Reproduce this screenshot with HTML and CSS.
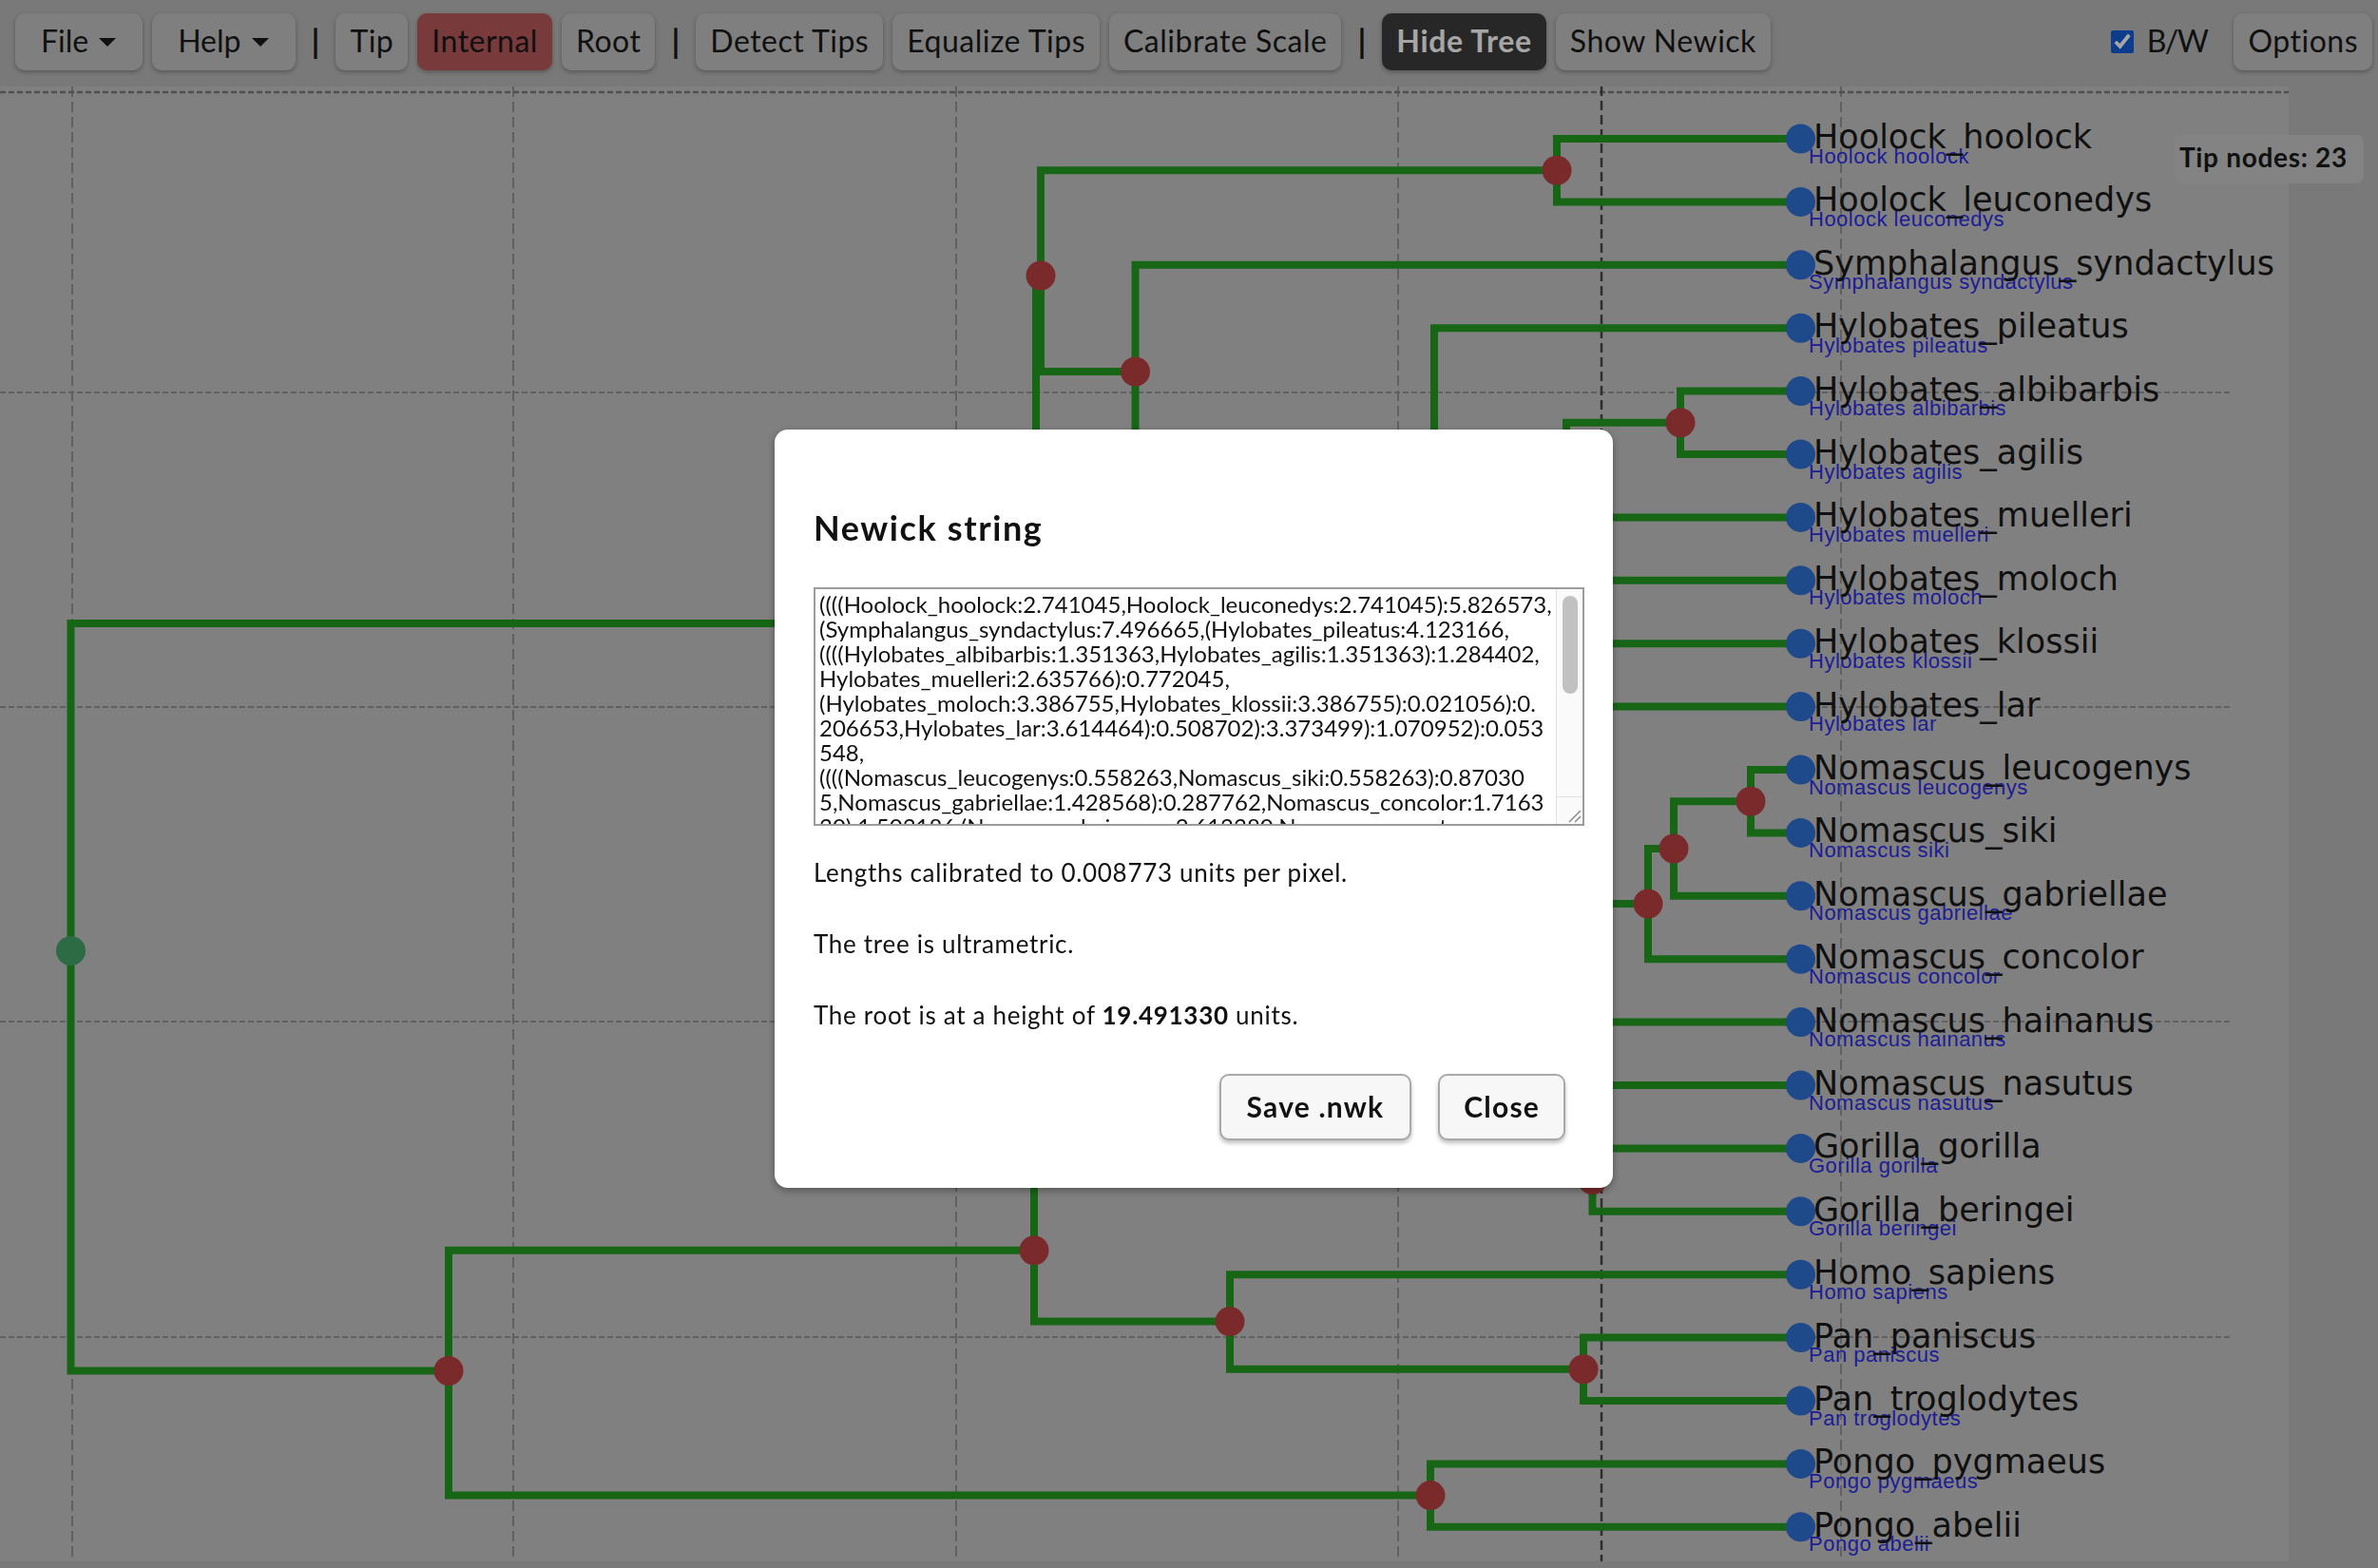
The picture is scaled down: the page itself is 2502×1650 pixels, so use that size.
FILE: index.html
```html
<!DOCTYPE html>
<html lang="en">
<head>
<meta charset="utf-8">
<title>Tree digitizer</title>
<link rel="stylesheet" href="styles.css">
</head>
<body>
<div class="app">
  <header class="toolbar">
    <button class="btn dropdown">File<span class="caret"></span></button>
    <button class="btn dropdown">Help<span class="caret"></span></button>
    <span class="sep">|</span>
    <button class="btn">Tip</button>
    <button class="btn btn-internal">Internal</button>
    <button class="btn">Root</button>
    <span class="sep">|</span>
    <button class="btn">Detect Tips</button>
    <button class="btn">Equalize Tips</button>
    <button class="btn">Calibrate Scale</button>
    <span class="sep">|</span>
    <button class="btn btn-dark">Hide Tree</button>
    <button class="btn">Show Newick</button>
    <span class="spacer"></span>
    <label class="bw"><input type="checkbox" checked>B/W</label>
    <button class="btn">Options</button>
  </header>

  <main class="workspace">
    <svg class="plot" width="2408" height="1552" viewBox="0 91 2408 1552" xmlns="http://www.w3.org/2000/svg">
      <g class="grid grid-v">
        <line x1="76" y1="91" x2="76" y2="1643"/>
        <line x1="540" y1="91" x2="540" y2="1643"/>
        <line x1="1006" y1="91" x2="1006" y2="1643"/>
        <line x1="1471" y1="91" x2="1471" y2="1643"/>
        <line x1="1937" y1="91" x2="1937" y2="1643"/>
      </g>
      <g class="grid grid-h">
        <line x1="0" y1="413" x2="2348" y2="413"/>
        <line x1="0" y1="744" x2="2348" y2="744"/>
        <line x1="0" y1="1075" x2="2348" y2="1075"/>
        <line x1="0" y1="1407" x2="2348" y2="1407"/>
      </g>
      <line class="frame-top" x1="0" y1="97" x2="2408" y2="97"/>
      <line class="grid-mark" x1="1685" y1="91" x2="1685" y2="1643"/>

      <path class="branch" d="M1090 656H74.5V1000.5 M472 1442.5H74.5V1000.5
        M1095 290H1090V656 M1594 1030H1090V656
        M1638 179.2H1095V290 M1194.5 391H1095V290
        M1894 146H1638V179.2 M1894 212.4H1638V179.2
        M1894 278.8H1194.5V391 M1509 500.8H1194.5V391
        M1894 345.2H1509V500.8 M1557 656.5H1509V500.8
        M1576 569.3H1557V656.5 M1894 743.6H1557V656.5
        M1648 494.6H1576V569.3 M1578 644H1576V569.3
        M1768 444.8H1648V494.6 M1894 544.4H1648V494.6
        M1894 411.6H1768V444.8 M1894 478H1768V444.8
        M1894 610.8H1578V644 M1894 677.2H1578V644
        M1734 951H1594V1030 M1651 1108.8H1594V1030
        M1761 893H1734V951 M1894 1009.2H1734V951
        M1842 843.2H1761V893 M1894 942.8H1761V893
        M1894 810H1842V843.2 M1894 876.4H1842V843.2
        M1894 1075.6H1651V1108.8 M1894 1142H1651V1108.8
        M1088 1315.8H472V1442.5 M1505 1573.6H472V1442.5
        M1675.5 1241.6H1088V1315.8 M1294 1390.6H1088V1315.8
        M1894 1208.4H1675.5V1241.6 M1894 1274.8H1675.5V1241.6
        M1894 1341.2H1294V1390.6 M1666 1440.8H1294V1390.6
        M1894 1407.6H1666V1440.8 M1894 1474H1666V1440.8
        M1894 1540.4H1505V1573.6 M1894 1606.8H1505V1573.6"/>

      <g class="node-int">
        <circle cx="1090" cy="656" r="15.5"/>
        <circle cx="1095" cy="290" r="15.5"/>
        <circle cx="1638" cy="179.2" r="15.5"/>
        <circle cx="1194.5" cy="391" r="15.5"/>
        <circle cx="1509" cy="500.8" r="15.5"/>
        <circle cx="1557" cy="656.5" r="15.5"/>
        <circle cx="1576" cy="569.3" r="15.5"/>
        <circle cx="1648" cy="494.6" r="15.5"/>
        <circle cx="1578" cy="644" r="15.5"/>
        <circle cx="1768" cy="444.8" r="15.5"/>
        <circle cx="1594" cy="1030" r="15.5"/>
        <circle cx="1734" cy="951" r="15.5"/>
        <circle cx="1761" cy="893" r="15.5"/>
        <circle cx="1842" cy="843.2" r="15.5"/>
        <circle cx="1651" cy="1108.8" r="15.5"/>
        <circle cx="472" cy="1442.5" r="15.5"/>
        <circle cx="1088" cy="1315.8" r="15.5"/>
        <circle cx="1675.5" cy="1241.6" r="15.5"/>
        <circle cx="1294" cy="1390.6" r="15.5"/>
        <circle cx="1666" cy="1440.8" r="15.5"/>
        <circle cx="1505" cy="1573.6" r="15.5"/>
      </g>
      <circle class="node-root" cx="74.5" cy="1000.5" r="15.5"/>

      <g class="tip" transform="translate(1894.5 146)"><circle r="15.5"/><text class="sci" x="8.5" y="25.7">Hoolock hoolock</text><text class="lbl" x="13.5" y="10">Hoolock_hoolock</text></g>
      <g class="tip" transform="translate(1894.5 212.4)"><circle r="15.5"/><text class="sci" x="8.5" y="25.7">Hoolock leuconedys</text><text class="lbl" x="13.5" y="10">Hoolock_leuconedys</text></g>
      <g class="tip" transform="translate(1894.5 278.8)"><circle r="15.5"/><text class="sci" x="8.5" y="25.7">Symphalangus syndactylus</text><text class="lbl" x="13.5" y="10">Symphalangus_syndactylus</text></g>
      <g class="tip" transform="translate(1894.5 345.2)"><circle r="15.5"/><text class="sci" x="8.5" y="25.7">Hylobates pileatus</text><text class="lbl" x="13.5" y="10">Hylobates_pileatus</text></g>
      <g class="tip" transform="translate(1894.5 411.6)"><circle r="15.5"/><text class="sci" x="8.5" y="25.7">Hylobates albibarbis</text><text class="lbl" x="13.5" y="10">Hylobates_albibarbis</text></g>
      <g class="tip" transform="translate(1894.5 478)"><circle r="15.5"/><text class="sci" x="8.5" y="25.7">Hylobates agilis</text><text class="lbl" x="13.5" y="10">Hylobates_agilis</text></g>
      <g class="tip" transform="translate(1894.5 544.4)"><circle r="15.5"/><text class="sci" x="8.5" y="25.7">Hylobates muelleri</text><text class="lbl" x="13.5" y="10">Hylobates_muelleri</text></g>
      <g class="tip" transform="translate(1894.5 610.8)"><circle r="15.5"/><text class="sci" x="8.5" y="25.7">Hylobates moloch</text><text class="lbl" x="13.5" y="10">Hylobates_moloch</text></g>
      <g class="tip" transform="translate(1894.5 677.2)"><circle r="15.5"/><text class="sci" x="8.5" y="25.7">Hylobates klossii</text><text class="lbl" x="13.5" y="10">Hylobates_klossii</text></g>
      <g class="tip" transform="translate(1894.5 743.6)"><circle r="15.5"/><text class="sci" x="8.5" y="25.7">Hylobates lar</text><text class="lbl" x="13.5" y="10">Hylobates_lar</text></g>
      <g class="tip" transform="translate(1894.5 810)"><circle r="15.5"/><text class="sci" x="8.5" y="25.7">Nomascus leucogenys</text><text class="lbl" x="13.5" y="10">Nomascus_leucogenys</text></g>
      <g class="tip" transform="translate(1894.5 876.4)"><circle r="15.5"/><text class="sci" x="8.5" y="25.7">Nomascus siki</text><text class="lbl" x="13.5" y="10">Nomascus_siki</text></g>
      <g class="tip" transform="translate(1894.5 942.8)"><circle r="15.5"/><text class="sci" x="8.5" y="25.7">Nomascus gabriellae</text><text class="lbl" x="13.5" y="10">Nomascus_gabriellae</text></g>
      <g class="tip" transform="translate(1894.5 1009.2)"><circle r="15.5"/><text class="sci" x="8.5" y="25.7">Nomascus concolor</text><text class="lbl" x="13.5" y="10">Nomascus_concolor</text></g>
      <g class="tip" transform="translate(1894.5 1075.6)"><circle r="15.5"/><text class="sci" x="8.5" y="25.7">Nomascus hainanus</text><text class="lbl" x="13.5" y="10">Nomascus_hainanus</text></g>
      <g class="tip" transform="translate(1894.5 1142)"><circle r="15.5"/><text class="sci" x="8.5" y="25.7">Nomascus nasutus</text><text class="lbl" x="13.5" y="10">Nomascus_nasutus</text></g>
      <g class="tip" transform="translate(1894.5 1208.4)"><circle r="15.5"/><text class="sci" x="8.5" y="25.7">Gorilla gorilla</text><text class="lbl" x="13.5" y="10">Gorilla_gorilla</text></g>
      <g class="tip" transform="translate(1894.5 1274.8)"><circle r="15.5"/><text class="sci" x="8.5" y="25.7">Gorilla beringei</text><text class="lbl" x="13.5" y="10">Gorilla_beringei</text></g>
      <g class="tip" transform="translate(1894.5 1341.2)"><circle r="15.5"/><text class="sci" x="8.5" y="25.7">Homo sapiens</text><text class="lbl" x="13.5" y="10">Homo_sapiens</text></g>
      <g class="tip" transform="translate(1894.5 1407.6)"><circle r="15.5"/><text class="sci" x="8.5" y="25.7">Pan paniscus</text><text class="lbl" x="13.5" y="10">Pan_paniscus</text></g>
      <g class="tip" transform="translate(1894.5 1474)"><circle r="15.5"/><text class="sci" x="8.5" y="25.7">Pan troglodytes</text><text class="lbl" x="13.5" y="10">Pan_troglodytes</text></g>
      <g class="tip" transform="translate(1894.5 1540.4)"><circle r="15.5"/><text class="sci" x="8.5" y="25.7">Pongo pygmaeus</text><text class="lbl" x="13.5" y="10">Pongo_pygmaeus</text></g>
      <g class="tip" transform="translate(1894.5 1606.8)"><circle r="15.5"/><text class="sci" x="8.5" y="25.7">Pongo abelii</text><text class="lbl" x="13.5" y="10">Pongo_abelii</text></g>
    </svg>
    <aside class="side"></aside>
    <div class="tipcount">Tip nodes: 23</div>
  </main>
</div>

<div class="backdrop">
  <section class="modal" role="dialog" aria-labelledby="newick-title">
    <h2 id="newick-title" class="modal-title">Newick string</h2>
    <div class="newick-field">
      <textarea class="newick" spellcheck="false">
((((Hoolock_hoolock:2.741045,Hoolock_leuconedys:2.741045):5.826573,
(Symphalangus_syndactylus:7.496665,(Hylobates_pileatus:4.123166,
((((Hylobates_albibarbis:1.351363,Hylobates_agilis:1.351363):1.284402,
Hylobates_muelleri:2.635766):0.772045,
(Hylobates_moloch:3.386755,Hylobates_klossii:3.386755):0.021056):0.
206653,Hylobates_lar:3.614464):0.508702):3.373499):1.070952):0.053
548,
((((Nomascus_leucogenys:0.558263,Nomascus_siki:0.558263):0.87030
5,Nomascus_gabriellae:1.428568):0.287762,Nomascus_concolor:1.7163
30):1.503186,(Nomascus_hainanus:2.612380,Nomascus_nasutus:
2.612380):0.607136):5.401650):10.870164,
(((Gorilla_gorilla:2.341870,Gorilla_beringei:2.341870):6.297050,
(Homo_sapiens:6.430780,(Pan_paniscus:2.443710,Pan_troglodytes:
2.443710):3.987070):2.208140):6.598660,
(Pongo_pygmaeus:4.169350,Pongo_abelii:4.169350):11.068230):
4.253750);</textarea>
      <div class="vscroll" aria-hidden="true">
        <div class="vscroll-track"><div class="vscroll-thumb"></div></div>
        <div class="vscroll-corner">
          <svg class="grip" width="16" height="16" viewBox="0 0 16 16"><path d="M15 3L3 15M15 9L9 15"/></svg>
        </div>
      </div>
    </div>
    <p class="info">Lengths calibrated to 0.008773 units per pixel.</p>
    <p class="info">The tree is ultrametric.</p>
    <p class="info">The root is at a height of <b>19.491330</b> units.</p>
    <div class="actions">
      <button class="mbtn">Save .nwk</button>
      <button class="mbtn mbtn-close">Close</button>
    </div>
  </section>
</div>
</body>
</html>
```

FILE: styles.css
```css
html, body {
  margin: 0;
  padding: 0;
}
body {
  width: 2502px;
  height: 1650px;
  overflow: hidden;
  background: #bababa;
  font-family: Lato, "Noto Sans", sans-serif;
  color: #1a1a1a;
}

/* ---------- toolbar ---------- */
.toolbar {
  display: flex;
  align-items: center;
  gap: 10px;
  height: 91px;
  box-sizing: border-box;
  padding: 0 6px 3px 16px;
  background: #bababa;
}
.btn {
  display: inline-flex;
  align-items: center;
  height: 60px;
  box-sizing: border-box;
  padding: 0 15px 4px;
  border: none;
  border-radius: 10px;
  background: #c3c3c3;
  box-shadow: 0 2px 5px rgba(0, 0, 0, 0.28);
  font-family: Lato, sans-serif;
  font-size: 32px;
  letter-spacing: 0.5px;
  color: #1a1a1a;
}
.btn.dropdown {
  padding: 0 28px 4px 27px;
  letter-spacing: 0;
}
.caret {
  width: 0;
  height: 0;
  margin: 4px 0 0 11px;
  border-left: 9px solid transparent;
  border-right: 9px solid transparent;
  border-top: 9px solid #1a1a1a;
}
.btn-internal {
  background: #b85a5a;
}
.btn-dark {
  background: #3c3c3c;
  color: #ffffff;
  font-weight: 700;
  letter-spacing: 0.7px;
}
.sep {
  margin: 0 7px;
  font-size: 34px;
  font-weight: 700;
  padding-bottom: 4px;
}
.spacer {
  flex: 1;
}
.bw {
  display: inline-flex;
  align-items: center;
  margin-right: 18px;
  font-size: 32px;
  letter-spacing: -1.5px;
  padding-bottom: 4px;
}
.bw input {
  width: 24px;
  height: 24px;
  margin: 4px 14px 0 0;
  accent-color: #165cd7;
}

/* ---------- workspace ---------- */
.workspace {
  position: relative;
  display: flex;
  height: 1552px;
}
.plot {
  display: block;
  flex: none;
  background: #c5c5c5;
}
.side {
  flex: 1;
}
.tipcount {
  position: absolute;
  top: 51px;
  right: 15px;
  height: 51px;
  box-sizing: border-box;
  padding: 0 17px 0 5px;
  border-radius: 8px;
  background: #cacaca;
  font-size: 28px;
  font-weight: 700;
  letter-spacing: 0.7px;
  line-height: 47px;
  color: #1a1a1a;
}

.grid line {
  stroke: #949494;
  stroke-width: 2;
  stroke-dasharray: 11 5;
}
.grid-h line {
  stroke-dasharray: 6 3;
}
.frame-top {
  stroke: #7b7b7b;
  stroke-width: 2.5;
  stroke-dasharray: 6 3;
}
.grid-mark {
  stroke: #474747;
  stroke-width: 2.5;
  stroke-dasharray: 10 5;
}
.branch {
  fill: none;
  stroke: #239d23;
  stroke-width: 8;
  stroke-linejoin: miter;
}
.node-int circle {
  fill: #bc4141;
}
.node-root {
  fill: #45a56a;
}
.tip circle {
  fill: #2e72d7;
}
.lbl {
  font-family: "DejaVu Sans", sans-serif;
  font-size: 35px;
  fill: #1a1a1a;
}
.sci {
  font-family: "Liberation Sans", Arial, sans-serif;
  font-size: 22px;
  letter-spacing: 0.5px;
  fill: #2e2ee6;
}

/* ---------- modal ---------- */
.backdrop {
  position: fixed;
  inset: 0;
  display: flex;
  align-items: center;
  justify-content: center;
  padding: 52px 0 0 10px;
  box-sizing: border-box;
  background: rgba(0, 0, 0, 0.35);
}
.modal {
  width: 882px;
  box-sizing: border-box;
  padding: 82px 30px 50px 41px;
  border-radius: 14px;
  background: #ffffff;
  box-shadow: 0 3px 8px rgba(0, 0, 0, 0.35);
  color: #111111;
}
.modal-title {
  margin: 0;
  font-size: 36px;
  font-weight: 700;
  letter-spacing: 1.6px;
  line-height: 43.2px;
}
.newick-field {
  display: flex;
  height: 251px;
  box-sizing: border-box;
  margin-top: 40px;
  border: 2px solid #9c9c9c;
  background: #ffffff;
}
.newick {
  flex: 1;
  min-width: 0;
  margin: 0;
  padding: 3px 0 0 4px;
  border: none;
  background: transparent;
  font-family: Lato, sans-serif;
  font-size: 24px;
  line-height: 26px;
  color: #111111;
  white-space: pre;
  overflow: hidden;
  resize: none;
  outline: none;
}
.vscroll {
  flex: none;
  display: flex;
  flex-direction: column;
  width: 28px;
  box-sizing: border-box;
  border-left: 1px solid #e2e2e2;
  background: #fafafa;
}
.vscroll-track {
  flex: 1;
  padding: 7px 5px 0 6px;
}
.vscroll-thumb {
  height: 103px;
  border-radius: 8px;
  background: #c1c1c1;
}
.vscroll-corner {
  display: flex;
  align-items: flex-end;
  justify-content: flex-end;
  height: 29px;
  box-sizing: border-box;
  border-top: 1px solid #e2e2e2;
  padding: 0 1px 1px 0;
}
.grip path {
  fill: none;
  stroke: #8a8a8a;
  stroke-width: 1.5;
}
.info {
  margin: 45px 0 0;
  font-size: 26px;
  letter-spacing: 0.7px;
  line-height: 30px;
}
.newick-field + .info {
  margin-top: 34px;
}
.actions {
  display: flex;
  justify-content: flex-end;
  gap: 28px;
  margin-top: 47px;
  padding-right: 20px;
}
.mbtn {
  height: 70px;
  box-sizing: border-box;
  padding: 0 27px 2px;
  border: 2px solid #a9a9a9;
  border-radius: 10px;
  background: #f7f7f7;
  box-shadow: 0 3px 4px rgba(0, 0, 0, 0.25);
  font-family: Lato, sans-serif;
  font-size: 30px;
  font-weight: 700;
  letter-spacing: 1.2px;
  color: #111111;
}
.mbtn-close {
  padding: 0 25px 2px;
}
```
